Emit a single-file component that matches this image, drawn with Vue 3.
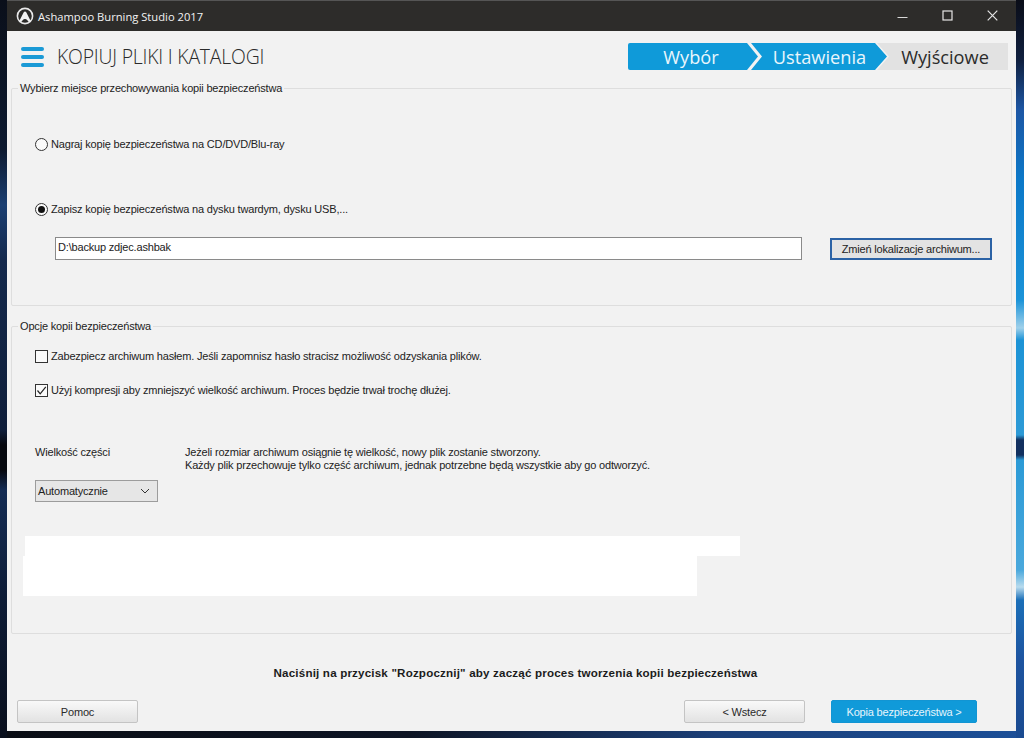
<script setup>
const steps = [
  { label: 'Wybór', cls: 'first' },
  { label: 'Ustawienia', cls: 'second' },
  { label: 'Wyjściowe', cls: 'third' }
]
</script>

<template>
  <div class="desktop">
    <div class="window">
      <div class="titlebar">
        <svg class="logo" width="18" height="18" viewBox="0 0 18 18">
          <circle cx="9" cy="9" r="7.6" fill="#2b2a28" stroke="#e8e8e8" stroke-width="1.6" />
          <path d="M3.2 14.2 L7.6 5.6 Q9 3.6 10.4 5.6 L14.8 14.2 Q12.4 15.6 11.4 13.2 Q9 10.6 6.6 13.2 Q5.6 15.6 3.2 14.2 Z" fill="#f2f2f2" />
        </svg>
        <span class="title">Ashampoo Burning Studio 2017</span>
        <div class="controls">
          <svg width="11" height="12" viewBox="0 0 11 12"><path d="M0.5 7.5H10.5" stroke="#d8d8d8" stroke-width="1" /></svg>
          <svg width="11" height="12" viewBox="0 0 11 12"><rect x="1" y="1" width="9" height="9" fill="none" stroke="#e6e6e6" stroke-width="1.2" /></svg>
          <svg width="11" height="12" viewBox="0 0 11 12"><path d="M0.7 0.7L10.3 10.3M10.3 0.7L0.7 10.3" stroke="#e6e6e6" stroke-width="1.2" /></svg>
        </div>
      </div>

      <div class="content">
        <div class="header">
          <div class="burger"><i></i><i></i><i></i></div>
          <h1>KOPIUJ PLIKI I KATALOGI</h1>
          <div class="steps">
            <div v-for="s in steps" :key="s.label" class="step" :class="s.cls">{{ s.label }}</div>
          </div>
        </div>

        <fieldset class="group top-group">
          <legend>Wybierz miejsce przechowywania kopii bezpieczeństwa</legend>
          <label class="option first-option"><span class="radio"></span>Nagraj kopię bezpieczeństwa na CD/DVD/Blu-ray</label>
          <label class="option second-option"><span class="radio on"></span>Zapisz kopię bezpieczeństwa na dysku twardym, dysku USB,...</label>
          <div class="path-row">
            <div class="path">D:\backup zdjec.ashbak</div>
            <button class="change">Zmień lokalizacje archiwum...</button>
          </div>
        </fieldset>

        <fieldset class="group bottom-group">
          <legend>Opcje kopii bezpieczeństwa</legend>
          <label class="option check-one"><span class="check"></span>Zabezpiecz archiwum hasłem. Jeśli zapomnisz hasło stracisz możliwość odzyskania plików.</label>
          <label class="option check-two">
            <span class="check">
              <svg width="13" height="13" viewBox="0 0 13 13"><path d="M2.5 6.5L5.2 9.8L10.8 2.8" fill="none" stroke="#222" stroke-width="1.2" /></svg>
            </span>Użyj kompresji aby zmniejszyć wielkość archiwum. Proces będzie trwał trochę dłużej.
          </label>
          <div class="size-row">
            <div class="size-col">
              <div class="size-label">Wielkość części</div>
              <div class="select">
                <span>Automatycznie</span>
                <svg width="10" height="6" viewBox="0 0 10 6"><path d="M1 1L5 5L9 1" fill="none" stroke="#333" stroke-width="1" /></svg>
              </div>
            </div>
            <div class="size-note">
              Jeżeli rozmiar archiwum osiągnie tę wielkość, nowy plik zostanie stworzony.<br />
              Każdy plik przechowuje tylko część archiwum, jednak potrzebne będą wszystkie aby go odtworzyć.
            </div>
          </div>
          <div class="blank-one"></div>
          <div class="blank-two"></div>
        </fieldset>

        <div class="hint">Naciśnij na przycisk "Rozpocznij" aby zacząć proces tworzenia kopii bezpieczeństwa</div>

        <div class="footer">
          <button class="btn">Pomoc</button>
          <button class="btn back">&lt; Wstecz</button>
          <button class="btn primary">Kopia bezpieczeństwa &gt;</button>
        </div>
      </div>
    </div>
  </div>
</template>

<style>
html, body { margin: 0; background: #0c1a2e; }
</style>

<style scoped>
.desktop {
  width: 1024px;
  height: 738px;
  overflow: hidden;
  box-sizing: border-box;
  padding: 0 8px 0 7px;
  background-color: #0c1a2e;
  background-repeat: no-repeat;
  background-image:
    linear-gradient(180deg, #0a0d18 0, #10203f 60px, #1d56a4 110px, #0b78c8 180px, #1b93d8 300px, #9fd0ea 328px, #1c93d6 340px, #2d9ad6 435px, #12305f 440px, #12305f 455px, #2b9ad6 460px, #4aa8dc 570px, #b8dbee 587px, #1b6fb8 600px, #1d54a0 660px, #1a4a90 738px),
    linear-gradient(180deg, #0a0f1a 0, #0d1a30 150px, #1b3f72 205px, #14294c 260px, #0f1e3a 430px, #07090f 445px, #07090f 470px, #142c54 490px, #0e1c36 600px, #090f1c 738px),
    linear-gradient(90deg, #0a0d14 0, #0d1424 40%, #1b3f78 70%, #1c4f98 100%);
  background-size: 8px 738px, 7px 738px, 1024px 7px;
  background-position: right top, left top, left bottom;
  font-family: "Liberation Sans", Arial, sans-serif;
  font-size: 11px;
  letter-spacing: -0.18px;
  color: #222;
}
.window {
  width: 1009px;
  height: 731px;
  display: flex;
  flex-direction: column;
  background: #f2f2f2;
  letter-spacing: inherit;
}
.titlebar {
  height: 31px;
  flex: none;
  box-sizing: border-box;
  background: #2d2c2a;
  border-top: 1px solid #555;
  display: flex;
  align-items: center;
  padding-left: 9px;
  color: #f2f2f2;
}
.title {
  margin-left: 4px;
  font-family: "Open Sans", sans-serif;
  font-size: 11.2px;
  letter-spacing: 0;
}
.controls {
  margin-left: auto;
  display: flex;
  gap: 34px;
  padding-right: 18px;
}
.content {
  flex: 1;
  display: flex;
  flex-direction: column;
  padding: 0 4px;
}
.header {
  height: 51px;
  flex: none;
  display: flex;
  align-items: center;
  padding-left: 10px;
  box-sizing: border-box;
}
.burger {
  width: 23px;
  display: flex;
  flex-direction: column;
  gap: 4px;
}
.burger i {
  display: block;
  height: 4px;
  border-radius: 2px;
  background: #1b9ad6;
}
h1 {
  margin: 0 0 0 13px;
  font-family: "Open Sans", sans-serif;
  font-weight: 300;
  font-size: 19.4px;
  letter-spacing: -0.2px;
  color: #2a2a2a;
}
.steps {
  margin-left: auto;
  margin-right: 4px;
  display: flex;
  height: 27px;
  width: 380px;
  font-family: "Open Sans", sans-serif;
  font-size: 18.2px;
  letter-spacing: 0;
}
.step {
  display: flex;
  align-items: center;
  justify-content: center;
  color: #eaf6fc;
  background: #0f9ad9;
}
.first {
  width: 130px;
  padding-right: 4px;
  box-sizing: border-box;
  border-radius: 2px 0 0 2px;
  clip-path: polygon(0 0, 119px 0, 130px 50%, 119px 100%, 0 100%);
  position: relative;
  z-index: 2;
}
.second {
  width: 136px;
  margin-left: -7px;
  padding-left: 1px;
  box-sizing: border-box;
  clip-path: polygon(0 0, 124px 0, 136px 50%, 124px 100%, 0 100%, 11px 50%);
  position: relative;
  z-index: 1;
}
.third {
  flex: 1;
  margin-left: -10px;
  padding-left: 5px;
  background: #e2e2e2;
  color: #2b2b2b;
  clip-path: polygon(0 0, 100% 0, 100% 100%, 0 100%, 12px 50%);
}
.group {
  margin: 0;
  padding: 0;
  min-width: 0;
  border: 1px solid #dedede;
  border-radius: 2px;
  flex: none;
  box-sizing: border-box;
}
.group legend {
  margin-left: 6px;
  padding: 0 2px 0 2px;
  line-height: 13px;
}
.top-group {
  height: 224px;
  margin-bottom: 14px;
}
.bottom-group {
  height: 314px;
  position: relative;
}
.option {
  display: flex;
  align-items: center;
  margin-left: 23px;
  height: 14px;
}
.first-option { margin-top: 42px; }
.second-option { margin-top: 51px; }
.check-one { margin-top: 16px; }
.check-two { margin-top: 20px; }
.radio {
  width: 13px;
  height: 13px;
  box-sizing: border-box;
  border: 1px solid #333;
  border-radius: 50%;
  margin-right: 3px;
  background: #fafafa;
  flex: none;
  display: flex;
  align-items: center;
  justify-content: center;
}
.radio.on::after {
  content: "";
  width: 7px;
  height: 7px;
  border-radius: 50%;
  background: #111;
}
.check {
  width: 13px;
  height: 13px;
  box-sizing: border-box;
  border: 1px solid #333;
  margin-right: 3px;
  background: #fafafa;
  flex: none;
  display: flex;
  align-items: center;
  justify-content: center;
}
.check svg { flex: none; }
.path-row {
  display: flex;
  align-items: center;
  margin-top: 21px;
  margin-left: 43px;
}
.path {
  width: 747px;
  height: 23px;
  line-height: 16px;
  box-sizing: border-box;
  padding: 1px 2px;
  background: #fff;
  border: 1px solid #8a8a8a;
}
.change {
  margin-left: 28px;
  width: 162px;
  height: 22px;
  padding: 0;
  box-sizing: border-box;
  background: #e3e3e3;
  border: 2px solid #2b62a5;
  font: inherit;
  letter-spacing: inherit;
  color: #222;
}
.size-row {
  display: flex;
  margin-top: 48px;
  margin-left: 23px;
}
.size-col { width: 150px; }
.size-label { line-height: 14px; }
.size-note { line-height: 13px; margin-top: 1px; }
.select {
  margin-top: 21px;
  width: 123px;
  height: 22px;
  box-sizing: border-box;
  border: 1px solid #9c9c9c;
  background: #e6e6e6;
  display: flex;
  align-items: center;
  justify-content: space-between;
  padding: 0 7px 0 2px;
}
.blank-one {
  margin-top: 34px;
  margin-left: 13px;
  width: 715px;
  height: 20px;
  background: #fff;
}
.blank-two {
  margin-left: 11px;
  width: 674px;
  height: 40px;
  background: #fff;
}
.hint {
  margin-top: 32px;
  margin-left: 8px;
  text-align: center;
  font-size: 11.6px;
  font-weight: 700;
  letter-spacing: 0.18px;
  line-height: 14px;
  color: #1c1c1c;
}
.footer {
  margin-top: 20px;
  display: flex;
  padding-left: 6px;
}
.btn {
  width: 121px;
  height: 23px;
  padding: 0;
  font: inherit;
  letter-spacing: inherit;
  color: #2a2a2a;
  border: 1px solid #c4c4c4;
  border-radius: 2px;
  background: linear-gradient(#f9f9f9, #e2e2e2);
}
.back { margin-left: auto; }
.primary {
  width: 146px;
  margin-left: 26px;
  margin-right: 35px;
  border-color: #1295d3;
  background: #109ad9;
  color: #e6f5fc;
}
</style>
